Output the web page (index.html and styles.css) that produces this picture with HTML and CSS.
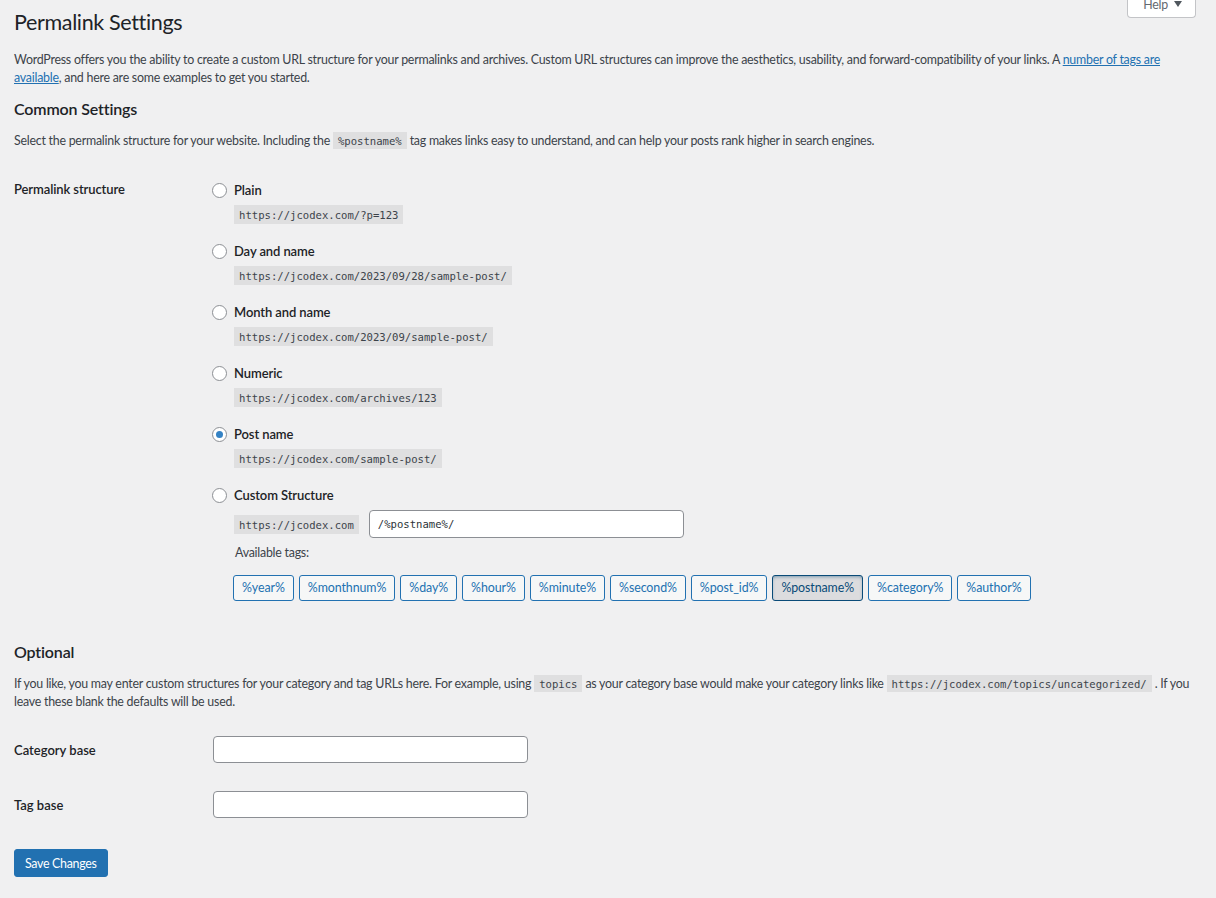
FILE: index.html
```html
<!DOCTYPE html>
<html lang="en">
<head>
<meta charset="utf-8">
<title>Permalink Settings</title>
<link rel="stylesheet" href="styles.css">
</head>
<body>
<div class="wrap">
  <div class="head">
    <h1>Permalink Settings</h1>
    <button class="help" type="button">Help <span class="caret"></span></button>
  </div>
  <p class="intro">WordPress offers you the ability to create a custom URL structure for your permalinks and archives. Custom URL structures can improve the aesthetics, usability, and forward-compatibility of your links. A <a href="#">number of tags are available</a>, and here are some examples to get you started.</p>

  <h2>Common Settings</h2>
  <p class="lead">Select the permalink structure for your website. Including the <code>%postname%</code> tag makes links easy to understand, and can help your posts rank higher in search engines.</p>

  <div class="form-table structure">
    <div class="th">Permalink structure</div>
    <div class="td">
      <div class="row">
        <label class="opt"><input type="radio" name="sel">Plain</label>
        <code class="ex">https://jcodex.com/?p=123</code>
      </div>
      <div class="row">
        <label class="opt"><input type="radio" name="sel">Day and name</label>
        <code class="ex">https://jcodex.com/2023/09/28/sample-post/</code>
      </div>
      <div class="row">
        <label class="opt"><input type="radio" name="sel">Month and name</label>
        <code class="ex">https://jcodex.com/2023/09/sample-post/</code>
      </div>
      <div class="row">
        <label class="opt"><input type="radio" name="sel">Numeric</label>
        <code class="ex">https://jcodex.com/archives/123</code>
      </div>
      <div class="row">
        <label class="opt"><input type="radio" name="sel" checked>Post name</label>
        <code class="ex">https://jcodex.com/sample-post/</code>
      </div>
      <div class="row last">
        <label class="opt"><input type="radio" name="sel">Custom Structure</label>
        <div class="custom">
          <code>https://jcodex.com</code>
          <input class="text mono" type="text" value="/%postname%/">
        </div>
        <div class="avail">Available tags:</div>
        <div class="tags">
          <button class="tag" type="button">%year%</button>
          <button class="tag" type="button">%monthnum%</button>
          <button class="tag" type="button">%day%</button>
          <button class="tag" type="button">%hour%</button>
          <button class="tag" type="button">%minute%</button>
          <button class="tag" type="button">%second%</button>
          <button class="tag" type="button">%post_id%</button>
          <button class="tag active" type="button">%postname%</button>
          <button class="tag" type="button">%category%</button>
          <button class="tag" type="button">%author%</button>
        </div>
      </div>
    </div>
  </div>

  <h2 class="optional">Optional</h2>
  <p class="lead">If you like, you may enter custom structures for your category and tag URLs here. For example, using <code>topics</code> as your category base would make your category links like <code>https://jcodex.com/topics/uncategorized/</code> . If you leave these blank the defaults will be used.</p>

  <div class="form-table bases">
    <div class="th2">Category base</div>
    <div class="td2"><input class="text" type="text"></div>
    <div class="th2">Tag base</div>
    <div class="td2"><input class="text" type="text"></div>
  </div>

  <button class="primary" type="button">Save Changes</button>
</div>
</body>
</html>
```

FILE: styles.css
```css
body {
  margin: 0;
  background: #f0f0f1;
  color: #3c434a;
  font-family: Lato, "Noto Sans", sans-serif;
  font-size: 12.4px;
  letter-spacing: -0.24px;
  line-height: 18px;
}

.wrap {
  padding: 0 20px 0 14px;
}

.head {
  display: flex;
  justify-content: space-between;
  align-items: flex-start;
}

h1 {
  margin: 0;
  padding-top: 7px;
  font-size: 21.5px;
  letter-spacing: -0.35px;
  font-weight: 400;
  line-height: 30px;
  color: #1d2327;
}

.help {
  margin-top: -9px;
  height: 27px;
  padding: 0 13px 0 15px;
  background: #fff;
  border: 1px solid #c3c4c7;
  border-top: 0;
  border-radius: 0 0 4px 4px;
  color: #646970;
  font-family: inherit;
  font-size: 12.4px;
  letter-spacing: inherit;
  line-height: 25px;
  display: flex;
  align-items: center;
  gap: 6px;
}

.caret {
  width: 0;
  height: 0;
  border-left: 4px solid transparent;
  border-right: 4px solid transparent;
  border-top: 6px solid #50575e;
}

.intro {
  margin: 14px 0 0;
}

a {
  color: #2271b1;
  text-decoration: underline;
}

h2 {
  margin: 11px 0 0;
  font-size: 16px;
  letter-spacing: -0.15px;
  font-weight: 600;
  line-height: 22px;
  color: #1d2327;
}

h2.optional {
  margin-top: 20px;
}

.lead {
  margin: 12px 0 0;
}

code {
  font-family: "DejaVu Sans Mono", monospace;
  font-size: 10.6px;
  letter-spacing: 0;
  line-height: 14px;
  padding: 3px 5px 2px;
  background: rgba(0, 0, 0, 0.07);
  color: #3c434a;
}

.form-table {
  display: grid;
  grid-template-columns: 199px 1fr;
  margin-top: 10px;
}

.th {
  padding-top: 20px;
  font-size: 13px;
  letter-spacing: -0.1px;
  font-weight: 600;
  color: #1d2327;
}

.td {
  padding: 20px 0;
}

.row {
  display: flex;
  flex-direction: column;
  align-items: flex-start;
  gap: 5px;
  margin-bottom: 17px;
}

.row.last {
  margin-bottom: 0;
}

.opt {
  display: flex;
  align-items: center;
  height: 20px;
  font-size: 13px;
  letter-spacing: -0.1px;
  font-weight: 600;
  color: #1d2327;
}

.opt input {
  appearance: none;
  -webkit-appearance: none;
  width: 15px;
  height: 15px;
  margin: 0 7px 0 -1px;
  border: 1px solid #8c8f94;
  border-radius: 50%;
  background: #fff;
  display: grid;
  place-items: center;
}

.opt input:checked::before {
  content: "";
  width: 7px;
  height: 7px;
  border-radius: 50%;
  background: #3582c4;
}

.ex {
  margin-left: 21px;
}

.custom {
  display: flex;
  align-items: center;
  gap: 10px;
  margin-left: 21px;
}

.text {
  box-sizing: border-box;
  width: 315px;
  height: 27px;
  padding: 0 8px;
  border: 1px solid #8c8f94;
  border-radius: 4px;
  background: #fff;
  color: #2c3338;
  font-family: inherit;
  font-size: 13px;
}

.text.mono {
  height: 28px;
  font-family: "DejaVu Sans Mono", monospace;
  font-size: 10.6px;
}

.avail {
  margin: 1px 0 0 22px;
}

.tags {
  display: flex;
  flex-wrap: wrap;
  gap: 5px;
  margin: 8px 0 0 20px;
}

.tag {
  height: 26px;
  padding: 0 8px;
  border: 1px solid #2271b1;
  border-radius: 3px;
  background: #f6f7f7;
  color: #2271b1;
  font-family: inherit;
  font-size: 12.4px;
  letter-spacing: -0.08px;
  line-height: 24px;
}

.tag.active {
  background: #dcdcde;
  border-color: #0a4b78;
  color: #0a4b78;
  box-shadow: inset 0 2px 5px -3px #0a4b78;
}

.th2 {
  padding: 20px 0 17px;
  font-size: 13px;
  letter-spacing: 0;
  font-weight: 600;
  color: #1d2327;
}

.td2 {
  padding: 15px 0 13px;
}

.primary {
  margin-top: 18px;
  height: 28px;
  padding: 0 10px;
  background: #2271b1;
  border: 1px solid #2271b1;
  border-radius: 3px;
  color: #fff;
  font-family: inherit;
  font-size: 12.4px;
  letter-spacing: -0.3px;
}
```
